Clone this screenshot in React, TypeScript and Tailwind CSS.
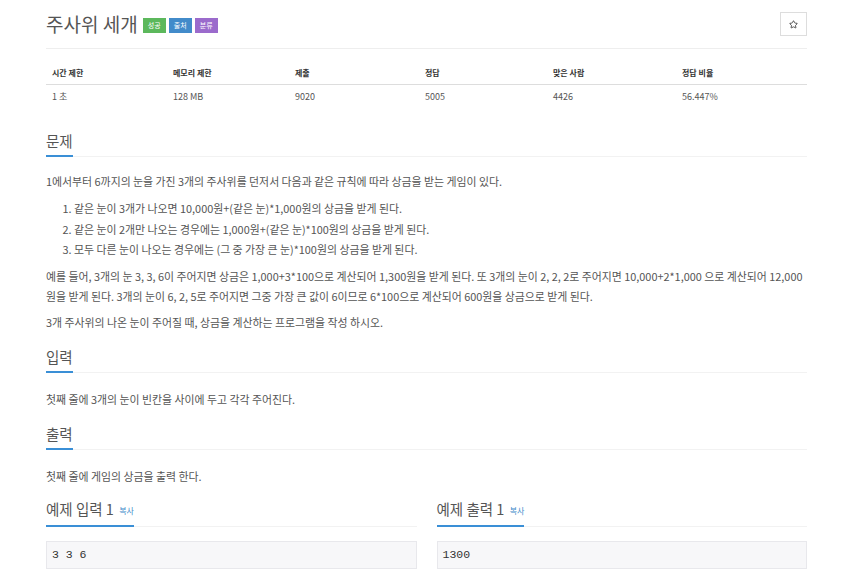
import { Star } from 'lucide-react'

const font = { fontFamily: '"Noto Sans CJK KR", "Noto Sans", sans-serif' }

const stats = [
  { label: '시간 제한', value: '1 초' },
  { label: '메모리 제한', value: '128 MB' },
  { label: '제출', value: '9020' },
  { label: '정답', value: '5005' },
  { label: '맞은 사람', value: '4426' },
  { label: '정답 비율', value: '56.447%' },
]

const SectionTitle = ({ children, className = '' }: { children: React.ReactNode; className?: string }) => (
  <div className={`border-b border-[#f2f2f2] ${className}`}>
    <h2 className="inline-block border-b-2 border-[#3a8fd6] -mb-px pb-[4px] text-[14.5px] leading-[20px] text-[#555]">
      {children}
    </h2>
  </div>
)

const Sample = ({ title, data }: { title: string; data: string }) => (
  <div className="flex-1">
    <SectionTitle>
      {title} <span className="ml-[2px] align-middle text-[8px] text-[#428bca]">복사</span>
    </SectionTitle>
    <pre className="mt-[14px] h-[28px] border border-[#e8e8ec] bg-[#f7f7f9] px-[5px] text-[11.5px] leading-[26px] text-[#333] font-['Liberation_Mono',monospace]">
      {data}
    </pre>
  </div>
)

export default function App() {
  return (
    <div className="min-h-screen bg-white" style={font}>
      <div className="ml-[46px] w-[761px] pt-[12px] text-[#555]">
        {/* title */}
        <div className="flex items-center justify-between border-b border-[#eee] pb-[12px]">
          <div className="flex items-center">
            <h1 className="text-[19px] leading-[24px] text-[#555]">주사위 세개</h1>
            <div className="ml-[5px] mt-[3px] flex gap-[3px]">
              <span className="w-[23px] bg-[#5cb85c] text-center text-[7px] leading-[15px] text-white">성공</span>
              <span className="w-[23px] bg-[#428bca] text-center text-[7px] leading-[15px] text-white">출처</span>
              <span className="w-[23px] bg-[#9b6bcc] text-center text-[7px] leading-[15px] text-white">분류</span>
            </div>
          </div>
          <button className="flex h-[24px] w-[27px] items-center justify-center border border-[#ddd] bg-white text-[#333]">
            <Star size={9} strokeWidth={2.2} />
          </button>
        </div>

        {/* stats table */}
        <div className="mt-[13px] grid grid-cols-[121px_122px_130px_128px_129px_1fr]">
          {stats.map((s) => (
            <div key={s.label} className="flex h-[23px] items-center border-b border-[#ddd] pl-[6px] text-[8px] font-bold text-[#333]">
              {s.label}
            </div>
          ))}
          {stats.map((s) => (
            <div key={s.label + 'v'} className="flex h-[24px] items-center pl-[6px] text-[9px] text-[#555]">
              {s.value}
            </div>
          ))}
        </div>

        {/* problem */}
        <SectionTitle className="mt-[19px]">문제</SectionTitle>
        <div className="mt-[14px] text-[10.9px] leading-[20px] text-[#555]">
          <p>1에서부터 6까지의 눈을 가진 3개의 주사위를 던저서 다음과 같은 규칙에 따라 상금을 받는 게임이 있다.</p>
          <ol className="mt-[7px] list-decimal pl-[28px] leading-[20.5px]">
            <li>같은 눈이 3개가 나오면 10,000원+(같은 눈)*1,000원의 상금을 받게 된다.</li>
            <li>같은 눈이 2개만 나오는 경우에는 1,000원+(같은 눈)*100원의 상금을 받게 된다.</li>
            <li>모두 다른 눈이 나오는 경우에는 (그 중 가장 큰 눈)*100원의 상금을 받게 된다.</li>
          </ol>
          <p className="mt-[6px]">
            예를 들어, 3개의 눈 3, 3, 6이 주어지면 상금은 1,000+3*100으로 계산되어 1,300원을 받게 된다. 또 3개의 눈이 2, 2, 2로 주어지면 10,000+2*1,000 으로 계산되어 12,000원을 받게 된다. 3개의 눈이 6, 2, 5로 주어지면 그중 가장 큰 값이 6이므로 6*100으로 계산되어 600원을 상금으로 받게 된다.
          </p>
          <p className="mt-[6px]">3개 주사위의 나온 눈이 주어질 때, 상금을 계산하는 프로그램을 작성 하시오.</p>
        </div>

        <SectionTitle className="mt-[12px]">입력</SectionTitle>
        <p className="mt-[16px] text-[10.9px] leading-[20px]">첫째 줄에 3개의 눈이 빈칸을 사이에 두고 각각 주어진다.</p>

        <SectionTitle className="mt-[12px]">출력</SectionTitle>
        <p className="mt-[16px] text-[10.9px] leading-[20px]">첫째 줄에 게임의 상금을 출력 한다.</p>

        <div className="mt-[10px] flex gap-[20px]">
          <Sample title="예제 입력 1" data="3 3 6" />
          <Sample title="예제 출력 1" data="1300" />
        </div>
      </div>
    </div>
  )
}
